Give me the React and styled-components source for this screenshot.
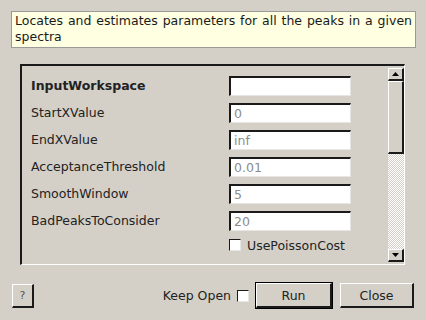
import React from 'react';
import styled, { createGlobalStyle } from 'styled-components';

const GlobalStyle = createGlobalStyle`
  html, body {
    margin: 0;
    padding: 0;
    background: #d4d0c8;
  }
  body {
    font-family: "DejaVu Sans", "Liberation Sans", sans-serif;
    font-size: 12.5px;
    color: #000;
  }
`;

const Dialog = styled.div`
  width: 426px;
  height: 320px;
  box-sizing: border-box;
  padding: 11px 10px 12px 11px;
  display: flex;
  flex-direction: column;
  overflow: hidden;
`;

const Description = styled.div`
  height: 37px;
  box-sizing: border-box;
  border: 1px solid #9a9a9a;
  background: #ffffe1;
  padding: 1px 3px 0 3px;
  line-height: 16px;
  color: #1a1a1a;
  text-align: justify;
  text-align-last: left;
`;

const Frame = styled.div`
  margin: 16px 11px 0 9px;
  height: 202px;
  box-sizing: border-box;
  border-style: solid;
  border-width: 2px 1px 1px 2px;
  border-color: #1a1a1a #ffffff #ffffff #1a1a1a;
  display: flex;
`;

const Content = styled.div`
  flex: 1;
  padding: 10px 0 0 9px;
  display: flex;
  flex-direction: column;
  gap: 7px;
`;

const Row = styled.div`
  display: flex;
  align-items: center;
  height: 20px;
`;

const Label = styled.div`
  width: 198px;
  font-weight: ${(p) => (p.$bold ? 'bold' : 'normal')};
  color: #222;
`;

const Field = styled.input`
  width: 122px;
  height: 20px;
  box-sizing: border-box;
  margin: 0;
  padding: 0 0 0 3px;
  font: inherit;
  background: #fff;
  border-style: solid;
  border-width: 2px 1px 1px 2px;
  border-color: #1a1a1a #e8e6e2 #e8e6e2 #1a1a1a;
  outline: none;
  &::placeholder {
    color: #8c8c8c;
  }
`;

const CheckRow = styled.label`
  display: flex;
  align-items: center;
  gap: 6px;
  margin-left: 198px;
  color: #222;
`;

const Box = styled.span`
  width: 12px;
  height: 12px;
  box-sizing: border-box;
  background: #fff;
  border-style: solid;
  border-width: 1px;
  border-color: #1a1a1a #e8e6e2 #e8e6e2 #1a1a1a;
  display: inline-block;
`;

const ScrollBar = styled.div`
  width: 16px;
  display: flex;
  flex-direction: column;
  padding: 2px 0 2px 0;
  box-sizing: border-box;
`;

const Arrow = styled.div`
  height: 13px;
  box-sizing: border-box;
  background: #d4d0c8;
  border-style: solid;
  border-width: 1px 2px 2px 1px;
  border-color: #fff #1a1a1a #1a1a1a #fff;
  display: flex;
  align-items: center;
  justify-content: center;
`;

const Thumb = styled.div`
  height: 73px;
  box-sizing: border-box;
  background: #d4d0c8;
  border-style: solid;
  border-width: 1px 2px 2px 1px;
  border-color: #fff #1a1a1a #1a1a1a #fff;
`;

const Track = styled.div`
  flex: 1;
  background-color: #ffffff;
  background-image: repeating-conic-gradient(#d4d0c8 0 25%, #ffffff 0 50%);
  background-size: 2px 2px;
`;

const Footer = styled.div`
  margin: 18px 2px 0 0;
  display: flex;
  align-items: center;
  height: 25px;
`;

const Button = styled.button`
  height: 25px;
  width: ${(p) => p.$w}px;
  box-sizing: border-box;
  margin: 0;
  padding: 0;
  font: inherit;
  color: #222;
  background: #d4d0c8;
  border-style: solid;
  border-width: 1px 2px 2px 1px;
  border-color: #fff #1a1a1a #1a1a1a #fff;
  outline: ${(p) => (p.$default ? '1px solid #000' : 'none')};
  outline-offset: 0;
`;

const HelpButton = styled(Button)`
  height: 24px;
  font-size: 11px;
  color: #555;
`;

const KeepOpen = styled.label`
  margin-left: auto;
  display: flex;
  align-items: center;
  gap: 6px;
  margin-right: 7px;
  color: #222;
`;

const Spacer = styled.div`
  width: ${(p) => p.$w}px;
`;

const rows = [
  { name: 'InputWorkspace', value: '', bold: true },
  { name: 'StartXValue', value: '0' },
  { name: 'EndXValue', value: 'inf' },
  { name: 'AcceptanceThreshold', value: '0.01' },
  { name: 'SmoothWindow', value: '5' },
  { name: 'BadPeaksToConsider', value: '20' },
];

const Tri = ({ up }) => (
  <svg width="7" height="4" viewBox="0 0 7 4">
    <path d={up ? 'M3.5 0 L7 4 L0 4 Z' : 'M0 0 L7 0 L3.5 4 Z'} fill="#000" />
  </svg>
);

export default function App() {
  return (
    <>
      <GlobalStyle />
      <Dialog>
        <Description>
          Locates and estimates parameters for all the peaks in a given spectra
        </Description>
        <Frame>
          <Content>
            {rows.map((r) => (
              <Row key={r.name}>
                <Label $bold={r.bold}>{r.name}</Label>
                <Field placeholder={r.value} />
              </Row>
            ))}
            <CheckRow>
              <Box />
              UsePoissonCost
            </CheckRow>
          </Content>
          <ScrollBar>
            <Arrow>
              <Tri up />
            </Arrow>
            <Thumb />
            <Track />
            <Arrow>
              <Tri />
            </Arrow>
          </ScrollBar>
        </Frame>
        <Footer>
          <Spacer $w={1} />
          <HelpButton $w={22}>?</HelpButton>
          <KeepOpen>
            Keep Open
            <Box />
          </KeepOpen>
          <Button $w={76} $default>
            Run
          </Button>
          <Spacer $w={8} />
          <Button $w={74}>Close</Button>
        </Footer>
      </Dialog>
    </>
  );
}
